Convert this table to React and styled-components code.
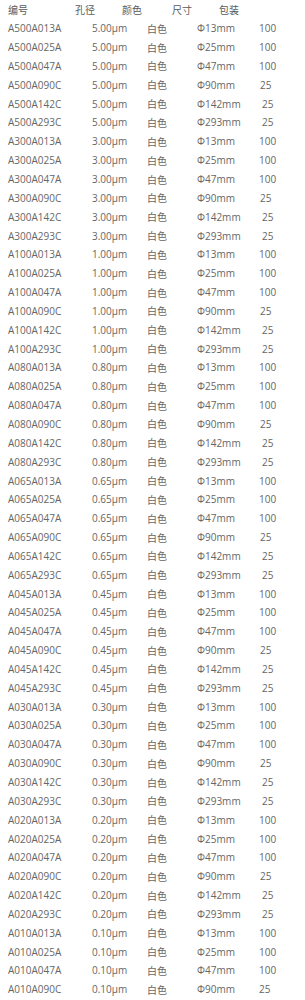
import React from 'react';
import styled, { createGlobalStyle } from 'styled-components';

const GlobalStyle = createGlobalStyle`
    body {
        margin: 0;
        background: #fff;
    }
`;

const Table = styled.div`
    width: 305px;
    font-family: 'Open Sans', 'Noto Sans CJK SC', sans-serif;
    font-size: 10px;
    color: #666;
`;

const HeaderRow = styled.div`
    display: grid;
    grid-template-columns: 67px 47px 50px 47px auto;
    align-items: center;
    height: 18.85px;
    padding-left: 8px;
    color: #5a5a5a;
`;

const Row = styled.div`
    display: grid;
    grid-template-columns: 84px 55px 50px 62px auto;
    align-items: center;
    height: 18.85px;
    padding-left: 8px;
    white-space: nowrap;
`;

const Pack = styled.span`
    padding-left: ${p => p.$shift}px;
`;

const groups = [
    ['A500', '5.00'],
    ['A300', '3.00'],
    ['A100', '1.00'],
    ['A080', '0.80'],
    ['A065', '0.65'],
    ['A045', '0.45'],
    ['A030', '0.30'],
    ['A020', '0.20'],
    ['A010', '0.10'],
];

const sizes = [
    { code: 'A013A', size: '13', pack: '100', shift: 0 },
    { code: 'A025A', size: '25', pack: '100', shift: 0 },
    { code: 'A047A', size: '47', pack: '100', shift: 0 },
    { code: 'A090C', size: '90', pack: '25', shift: 1 },
    { code: 'A142C', size: '142', pack: '25', shift: 3 },
    { code: 'A293C', size: '293', pack: '25', shift: 3 },
];

const rows = [];
groups.forEach(([prefix, pore], gi) => {
    const list = gi === groups.length - 1 ? sizes.slice(0, 4) : sizes;
    list.forEach(s => {
        rows.push({
            id: prefix + s.code,
            pore: pore + 'μm',
            size: 'Φ' + s.size + 'mm',
            pack: s.pack,
            shift: gi === groups.length - 1 ? 0 : s.shift,
        });
    });
});

const App = () => (
    <>
        <GlobalStyle />
        <Table>
            <HeaderRow>
                <span>编号</span>
                <span>孔径</span>
                <span>颜色</span>
                <span>尺寸</span>
                <span>包装</span>
            </HeaderRow>
            {rows.map(r => (
                <Row key={r.id}>
                    <span>{r.id}</span>
                    <span>{r.pore}</span>
                    <span>白色</span>
                    <span>{r.size}</span>
                    <Pack $shift={r.shift}>{r.pack}</Pack>
                </Row>
            ))}
        </Table>
    </>
);

export default App;
